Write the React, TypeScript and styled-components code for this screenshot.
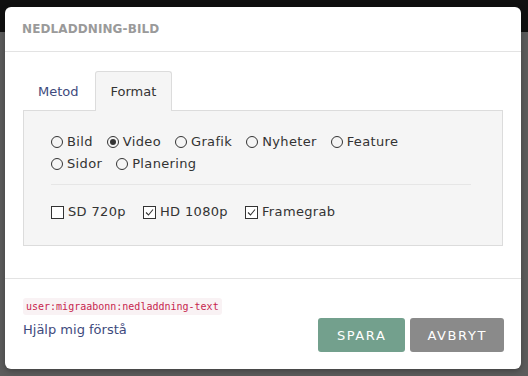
import React from "react";
import styled, { createGlobalStyle } from "styled-components";

const GlobalStyle = createGlobalStyle`
  html, body { margin: 0; padding: 0; }
  body { font-family: "DejaVu Sans", Verdana, sans-serif; }
`;

const Backdrop = styled.div`
  width: 528px;
  height: 376px;
  background: linear-gradient(#101010 0 32px, #5c5c5c 32px);
  padding: 7px 7px 0 5px;
  box-sizing: border-box;
  overflow: hidden;
`;

const Modal = styled.div`
  width: 516px;
  height: 362px;
  background: #fff;
  border-radius: 6px;
  display: flex;
  flex-direction: column;
  box-shadow: 0 2px 6px rgba(0, 0, 0, 0.3);
`;

const Header = styled.div`
  height: 44px;
  border-bottom: 1px solid #e3e3e3;
  display: flex;
  align-items: center;
  padding: 0 17px;
`;

const Title = styled.h4`
  margin: 0;
  font-size: 12px;
  font-weight: 600;
  color: #9a9a9a;
  letter-spacing: 0.1px;
`;

const Body = styled.div`
  padding: 18px 18px 32px 18px;
  border-bottom: 1px solid #e3e3e3;
`;

const Tabs = styled.div`
  display: flex;
  align-items: flex-end;
  height: 40px;
`;

const Tab = styled.div<{ $active?: boolean }>`
  height: 40px;
  box-sizing: border-box;
  padding: 0 15px 0 ${(p) => (p.$active ? "15px" : "14px")};
  display: flex;
  align-items: center;
  font-size: 13px;
  color: ${(p) => (p.$active ? "#333" : "#3e4a7d")};
  background: ${(p) => (p.$active ? "#f5f5f5" : "transparent")};
  border: 1px solid ${(p) => (p.$active ? "#dcdcdc" : "transparent")};
  border-bottom: none;
  border-radius: 3px 3px 0 0;
  margin-bottom: -1px;
  position: relative;
  z-index: 1;
`;

const Panel = styled.div`
  background: #f5f5f5;
  border: 1px solid #dcdcdc;
  padding: 20px 31px 22px 27px;
  height: 136px;
  box-sizing: border-box;
`;

const OptionRow = styled.div`
  display: flex;
  flex-wrap: wrap;
  column-gap: 14px;
  line-height: 22px;
  max-width: 400px;
`;

const Option = styled.label`
  display: inline-flex;
  align-items: center;
  gap: 4px;
  font-size: 13px;
  letter-spacing: 0.35px;
  color: #333;
`;

const RadioDot = styled.span<{ $checked?: boolean }>`
  width: 10px;
  height: 10px;
  border: 1px solid #333;
  border-radius: 50%;
  display: inline-flex;
  align-items: center;
  justify-content: center;
  &::after {
    content: "";
    width: 6px;
    height: 6px;
    border-radius: 50%;
    background: ${(p) => (p.$checked ? "#333" : "transparent")};
  }
`;

const CheckBox = styled.span`
  width: 11px;
  height: 11px;
  border: 1px solid #333;
  display: inline-flex;
  align-items: center;
  justify-content: center;
  background: #fff;
`;

const Separator = styled.hr`
  border: none;
  border-top: 1px solid #e6e6e6;
  margin: 9px 0 16px 0;
`;

const CheckRow = styled.div`
  display: flex;
  gap: 17px;
  line-height: 22px;
`;

const Footer = styled.div`
  flex: 1;
  display: flex;
  justify-content: space-between;
  align-items: flex-end;
  padding: 19px 17px 17px 18px;
`;

const HelpCol = styled.div`
  align-self: flex-start;
  display: flex;
  flex-direction: column;
  gap: 7px;
`;

const Code = styled.code`
  font-family: "DejaVu Sans Mono", "Liberation Mono", monospace;
  font-size: 10px;
  color: #c7254e;
  background: #f9f2f4;
  padding: 3px 3px;
  border-radius: 3px;
  align-self: flex-start;
`;

const HelpLink = styled.a`
  font-size: 13px;
  color: #3e4a7d;
  text-decoration: none;
`;

const Buttons = styled.div`
  display: flex;
  gap: 5px;
`;

const Button = styled.button<{ $variant: "save" | "cancel" }>`
  height: 34px;
  padding: 0 ${(p) => (p.$variant === "save" ? "19px" : "17px")};
  border: none;
  border-radius: 3px;
  background: ${(p) => (p.$variant === "save" ? "#73a08d" : "#8a8a8a")};
  color: #fff;
  font-family: inherit;
  font-size: 13px;
  letter-spacing: 1.6px;
`;

const Check = () => (
  <svg width="9" height="9" viewBox="0 0 9 9">
    <path d="M1 4.5 L3.5 7 L8 1.5" fill="none" stroke="#333" strokeWidth="1.1" />
  </svg>
);

const radios = [
  { label: "Bild" },
  { label: "Video", checked: true },
  { label: "Grafik" },
  { label: "Nyheter" },
  { label: "Feature" },
  { label: "Sidor" },
  { label: "Planering" },
];

const checks = [
  { label: "SD 720p", checked: false },
  { label: "HD 1080p", checked: true },
  { label: "Framegrab", checked: true },
];

export default function App() {
  return (
    <>
      <GlobalStyle />
      <Backdrop>
        <Modal>
          <Header>
            <Title>NEDLADDNING-BILD</Title>
          </Header>
          <Body>
            <Tabs>
              <Tab>Metod</Tab>
              <Tab $active>Format</Tab>
            </Tabs>
            <Panel>
              <OptionRow>
                {radios.map((r) => (
                  <Option key={r.label}>
                    <RadioDot $checked={r.checked} />
                    {r.label}
                  </Option>
                ))}
              </OptionRow>
              <Separator />
              <CheckRow>
                {checks.map((c) => (
                  <Option key={c.label}>
                    <CheckBox>{c.checked && <Check />}</CheckBox>
                    {c.label}
                  </Option>
                ))}
              </CheckRow>
            </Panel>
          </Body>
          <Footer>
            <HelpCol>
              <Code>user:migraabonn:nedladdning-text</Code>
              <HelpLink href="#">Hjälp mig förstå</HelpLink>
            </HelpCol>
            <Buttons>
              <Button $variant="save">SPARA</Button>
              <Button $variant="cancel">AVBRYT</Button>
            </Buttons>
          </Footer>
        </Modal>
      </Backdrop>
    </>
  );
}
